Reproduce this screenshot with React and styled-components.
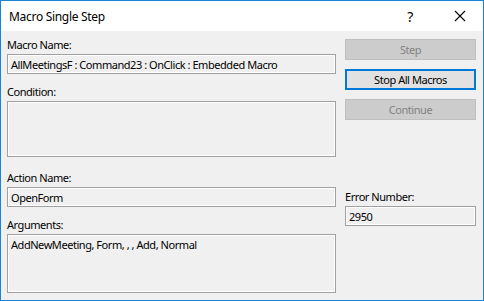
import React from "react";
import styled, { createGlobalStyle } from "styled-components";

const GlobalStyle = createGlobalStyle`
  html, body {
    margin: 0;
    padding: 0;
    background: #ffffff;
  }
  body {
    font-family: "Noto Sans", "Open Sans", sans-serif;
    font-size: 11px;
    letter-spacing: -0.45px;
    color: #000000;
  }
`;

function App() {
  return (
    <>
      <GlobalStyle />
      <Window>
        <TitleBar>
          <Title>Macro Single Step</Title>
          <TitleButtons>
            <TitleBtn>?</TitleBtn>
            <TitleBtn>
              <svg width="12" height="12" viewBox="0 0 12 12">
                <path d="M1 1 L11 11 M11 1 L1 11" stroke="#000" strokeWidth="1.1" />
              </svg>
            </TitleBtn>
          </TitleButtons>
        </TitleBar>

        <Body>
          <LeftColumn>
            <Label>Macro Name:</Label>
            <Field>AllMeetingsF : Command23 : OnClick : Embedded Macro</Field>

            <Label spacing={10}>Condition:</Label>
            <Field height={56}></Field>

            <Label spacing={13}>Action Name:</Label>
            <Field>OpenForm</Field>

            <Label spacing={10}>Arguments:</Label>
            <Field height={59}>AddNewMeeting, Form, , , Add, Normal</Field>
          </LeftColumn>

          <RightColumn>
            <Button disabled>Step</Button>
            <Button primary>Stop All Macros</Button>
            <Button disabled>Continue</Button>

            <Label spacing={60}>Error Number:</Label>
            <Field>2950</Field>
          </RightColumn>
        </Body>
      </Window>
    </>
  );
}

const Window = styled.div`
  width: 484px;
  height: 301px;
  box-sizing: border-box;
  border: 1px solid #1883d7;
  display: flex;
  flex-direction: column;
  background: #f0f0f0;
`;

const TitleBar = styled.div`
  height: 30px;
  background: #ffffff;
  display: flex;
  align-items: center;
  justify-content: space-between;
  padding-left: 8px;
`;

const Title = styled.div`
  font-size: 12px;
  letter-spacing: -0.3px;
  color: #000000;
`;

const TitleButtons = styled.div`
  display: flex;
  height: 100%;
`;

const TitleBtn = styled.div`
  width: 46px;
  height: 100%;
  display: flex;
  align-items: center;
  justify-content: center;
  font-size: 14px;
  padding-left: 4px;
`;

const Body = styled.div`
  flex: 1;
  display: flex;
  padding: 6px 6px 7px 6px;
  gap: 9px;
`;

const LeftColumn = styled.div`
  width: 329px;
  display: flex;
  flex-direction: column;
`;

const RightColumn = styled.div`
  width: 131px;
  display: flex;
  flex-direction: column;
  padding-top: 2px;
`;

const Label = styled.div`
  height: 17px;
  line-height: 15px;
  margin-top: ${(p) => p.spacing || 0}px;
  white-space: nowrap;
`;

const Field = styled.div`
  box-sizing: border-box;
  height: ${(p) => p.height || 20}px;
  border: 1px solid #a0a0a0;
  box-shadow: inset 0 0 0 1px #ffffff;
  background: #f0f0f0;
  padding: 1px 3px;
  line-height: 17px;
  white-space: nowrap;
  overflow: hidden;
`;

const Button = styled.div`
  box-sizing: border-box;
  height: 21px;
  margin-bottom: 9px;
  display: flex;
  align-items: center;
  justify-content: center;
  background: ${(p) => (p.disabled ? "#cccccc" : "#e1e1e1")};
  border: ${(p) => (p.primary ? "2px solid #0078d7" : "1px solid #bfbfbf")};
  color: ${(p) => (p.disabled ? "#838383" : "#000000")};
`;

export default App;
